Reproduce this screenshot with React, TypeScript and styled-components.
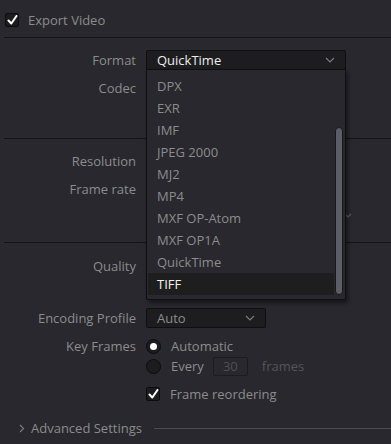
import styled, { createGlobalStyle } from "styled-components";

const GlobalStyle = createGlobalStyle`
    html, body {
        margin: 0;
        padding: 0;
        background: #28282e;
    }
    body {
        font-family: "Open Sans", "Noto Sans", sans-serif;
        font-size: 13px;
        color: #8c8c8c;
    }
`;

const Panel = styled.div`
    width: 391px;
    height: 444px;
    padding-left: 4px;
    box-sizing: border-box;
    overflow: hidden;
    background: #28282e;
`;

const Header = styled.div`
    height: 38px;
    box-sizing: border-box;
    display: flex;
    align-items: center;
    gap: 9px;
    padding: 3px 0 0 1px;
    border-bottom: 1px solid #141416;
`;

const Section = styled.div<{ $bottom: number }>`
    display: flex;
    flex-direction: column;
    gap: 8px;
    padding: 12px 0 ${(p) => p.$bottom}px;
    border-bottom: 1px solid #141416;
`;

const PlainSection = styled.div`
    display: flex;
    flex-direction: column;
    padding-top: 13px;
`;

const Row = styled.div<{ $mt?: number }>`
    display: grid;
    grid-template-columns: 132px 1fr;
    column-gap: 10px;
    align-items: center;
    height: 20px;
    margin-top: ${(p) => p.$mt ?? 0}px;
`;

const Label = styled.div`
    text-align: right;
    white-space: nowrap;
    color: #8c8c8c;
`;

const Field = styled.div`
    position: relative;
    display: flex;
    align-items: center;
    gap: 10px;
    height: 20px;
`;

const Select = styled.div<{ $width: number }>`
    width: ${(p) => p.$width}px;
    height: 20px;
    box-sizing: border-box;
    display: flex;
    align-items: center;
    justify-content: space-between;
    padding: 0 10px;
    background: #1d1d20;
    border: 1px solid #0f0f11;
    border-radius: 2px;
`;

const SelectValue = styled.span<{ $bright?: boolean }>`
    color: ${(p) => (p.$bright ? "#ececec" : "#8c8c8c")};
`;

const Chevron = styled.svg`
    width: 10px;
    height: 6px;
    flex: none;
`;

const ChevronDown = () => (
    <Chevron viewBox="0 0 10 6">
        <path d="M1 1l4 4 4-4" fill="none" stroke="#7a7a7e" strokeWidth="1.2" />
    </Chevron>
);

const Popup = styled.div`
    position: absolute;
    left: 0;
    top: 19px;
    width: 200px;
    height: 231px;
    box-sizing: border-box;
    padding: 5px 0 0 1px;
    background: #28282e;
    border: 1px solid #0f0f11;
    border-radius: 0 0 2px 2px;
    box-shadow: 2px 3px 4px rgba(0, 0, 0, 0.45);
    z-index: 5;
`;

const Option = styled.div<{ $active?: boolean }>`
    height: 22px;
    width: 186px;
    display: flex;
    align-items: center;
    padding-left: 9px;
    box-sizing: border-box;
    color: ${(p) => (p.$active ? "#f0f0f0" : "#8c8c8c")};
    background: ${(p) => (p.$active ? "#1e1e1f" : "transparent")};
`;

const ScrollThumb = styled.div`
    position: absolute;
    right: 2px;
    top: 57px;
    width: 6px;
    height: 166px;
    background: #5b5e66;
    border: 1px solid #18181b;
    border-radius: 4px;
`;

const PeekChevron = styled.svg`
    position: absolute;
    left: 198px;
    top: 6px;
    width: 8px;
    height: 6px;
`;

const Box = styled.div`
    width: 14px;
    height: 14px;
    box-sizing: border-box;
    display: flex;
    align-items: center;
    justify-content: center;
    background: #1c1c1f;
    border: 1px solid #0c0c0e;
    border-radius: 2px;
    flex: none;
`;

const CheckMark = () => (
    <svg width="11" height="10" viewBox="0 0 11 10">
        <path d="M1.5 5.5l2.8 3L9.5 1" fill="none" stroke="#ffffff" strokeWidth="2" strokeLinecap="round" strokeLinejoin="round" />
    </svg>
);

const Radio = styled.div<{ $on?: boolean }>`
    width: 15px;
    height: 15px;
    box-sizing: border-box;
    border-radius: 50%;
    background: #1c1c1f;
    border: 1px solid #0c0c0e;
    display: flex;
    align-items: center;
    justify-content: center;
    flex: none;

    &::after {
        content: "";
        width: 7px;
        height: 7px;
        border-radius: 50%;
        background: #ffffff;
        display: ${(p) => (p.$on ? "block" : "none")};
    }
`;

const OptionLine = styled.div`
    display: flex;
    align-items: center;
    gap: 10px;
`;

const NumberBox = styled.div`
    width: 35px;
    height: 19px;
    box-sizing: border-box;
    display: flex;
    align-items: center;
    justify-content: center;
    border: 1px solid #1c1c1f;
    border-radius: 2px;
    color: #505055;
    margin-left: -1px;
`;

const Dim = styled.span`
    color: #55555a;
    margin-left: 4px;
`;

const HeaderText = styled.span`
    color: #8c8c8c;
`;

const Advanced = styled.div`
    display: flex;
    align-items: center;
    height: 18px;
    margin-top: 15px;
    padding-left: 15px;
    gap: 6px;
`;

const AdvancedRule = styled.div`
    flex: 1;
    height: 1px;
    background: #4a4a50;
    margin-left: 6px;
`;

const formats = [
    "DPX",
    "EXR",
    "IMF",
    "JPEG 2000",
    "MJ2",
    "MP4",
    "MXF OP-Atom",
    "MXF OP1A",
    "QuickTime",
    "TIFF",
];

const App = () => {
    return (
        <>
            <GlobalStyle />
            <Panel>
                <Header>
                    <Box>
                        <CheckMark />
                    </Box>
                    <HeaderText>Export Video</HeaderText>
                </Header>

                <Section $bottom={40}>
                    <Row>
                        <Label>Format</Label>
                        <Field>
                            <Select $width={200}>
                                <SelectValue $bright>QuickTime</SelectValue>
                                <ChevronDown />
                            </Select>
                            <Popup>
                                {formats.map((f) => (
                                    <Option key={f} $active={f === "TIFF"}>
                                        {f}
                                    </Option>
                                ))}
                                <ScrollThumb />
                            </Popup>
                        </Field>
                    </Row>
                    <Row>
                        <Label>Codec</Label>
                        <Field />
                    </Row>
                </Section>

                <Section $bottom={15}>
                    <Row>
                        <Label>Resolution</Label>
                        <Field />
                    </Row>
                    <Row>
                        <Label>Frame rate</Label>
                        <Field />
                    </Row>
                    <Row>
                        <Label />
                        <Field>
                            <PeekChevron viewBox="0 0 8 6">
                                <path d="M1 1l3 3 3-3" fill="none" stroke="#5c5c62" strokeWidth="1.2" />
                            </PeekChevron>
                        </Field>
                    </Row>
                </Section>

                <PlainSection>
                    <Row>
                        <Label>Quality</Label>
                        <Field />
                    </Row>
                    <Row $mt={32}>
                        <Label>Encoding Profile</Label>
                        <Field>
                            <Select $width={120}>
                                <SelectValue>Auto</SelectValue>
                                <ChevronDown />
                            </Select>
                        </Field>
                    </Row>
                    <Row $mt={8}>
                        <Label>Key Frames</Label>
                        <Field>
                            <Radio $on />
                            <span>Automatic</span>
                        </Field>
                    </Row>
                    <Row>
                        <Label />
                        <Field>
                            <OptionLine>
                                <Radio />
                                <span>Every</span>
                                <NumberBox>30</NumberBox>
                                <Dim>frames</Dim>
                            </OptionLine>
                        </Field>
                    </Row>
                    <Row $mt={8}>
                        <Label />
                        <Field>
                            <Box>
                                <CheckMark />
                            </Box>
                            <span>Frame reordering</span>
                        </Field>
                    </Row>
                    <Advanced>
                        <svg width="6" height="9" viewBox="0 0 6 9">
                            <path d="M1 1l3.5 3.5L1 8" fill="none" stroke="#7a7a7e" strokeWidth="1.2" />
                        </svg>
                        <span>Advanced Settings</span>
                        <AdvancedRule />
                    </Advanced>
                </PlainSection>
            </Panel>
        </>
    );
};

export default App;
